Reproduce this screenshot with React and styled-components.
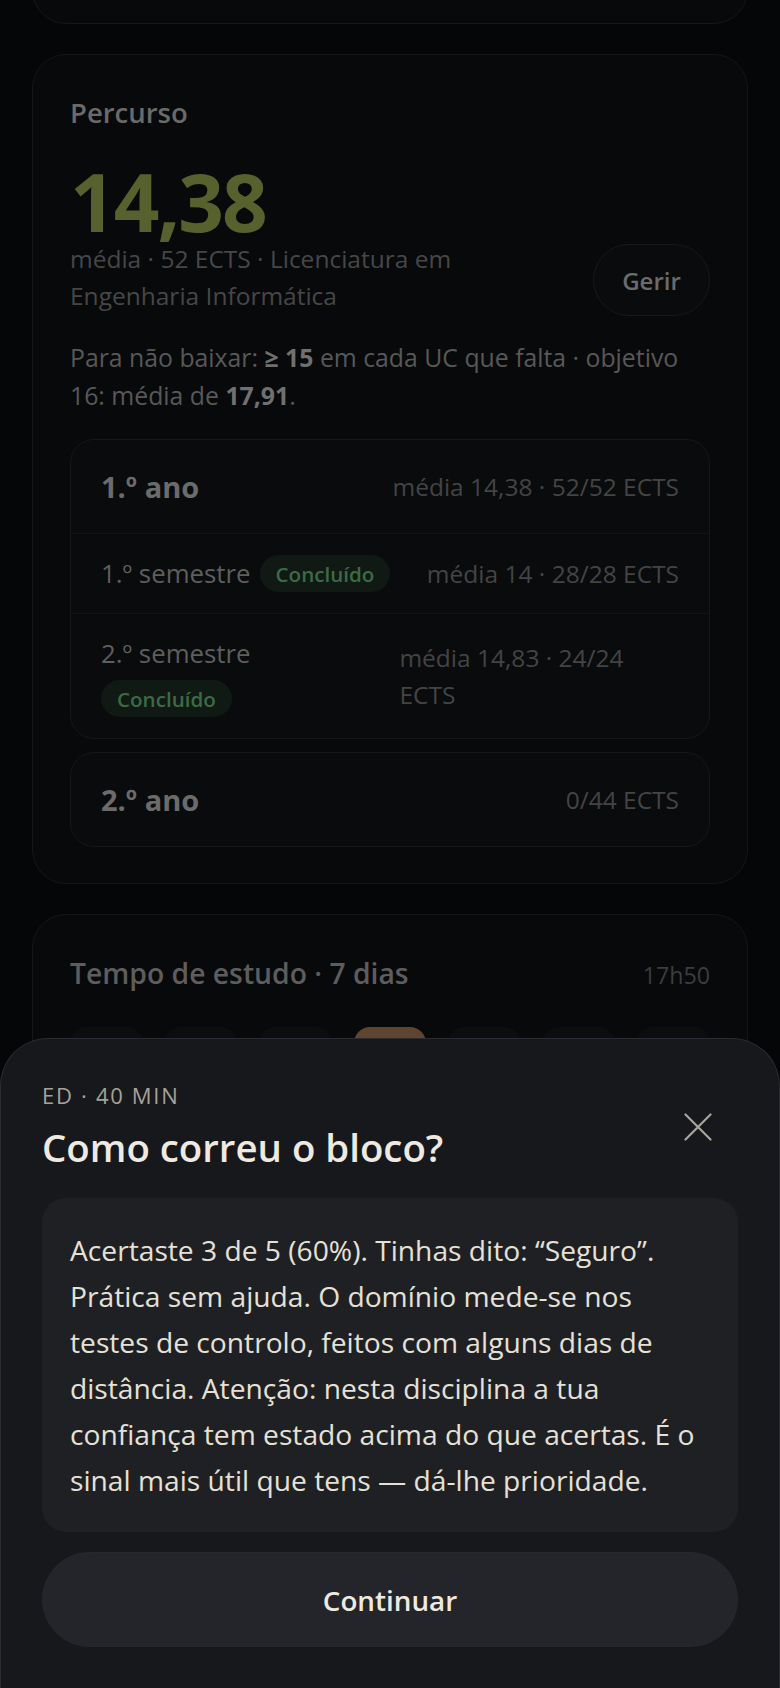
import React from 'react';
import styled, { createGlobalStyle } from 'styled-components';

const GlobalStyle = createGlobalStyle`
  html, body {
    margin: 0;
    padding: 0;
    background: #050607;
  }
  body {
    font-family: "Open Sans", "Noto Sans", sans-serif;
    -webkit-font-smoothing: antialiased;
  }
  * { box-sizing: border-box; }
`;

const Page = styled.div`
  display: flex;
  flex-direction: column;
  gap: 30px;
  padding: 0 32px;
  overflow: hidden;
  height: 1688px;
`;

const Card = styled.section`
  background: #08090b;
  border: 1px solid #15161a;
  border-radius: 34px;
  padding: 39px 37px 36px;
  flex-shrink: 0;
`;

const TopCard = styled(Card)`
  height: 120px;
  margin-top: -96px;
`;

const CardTitle = styled.h2`
  margin: 0;
  font-size: ${p => p.size || '27.5px'};
  line-height: 38px;
  font-weight: 600;
  color: ${p => p.color || '#6a6a6a'};
`;

const BigNumber = styled.div`
  margin-top: 30px;
  font-size: 80px;
  line-height: 78px;
  font-weight: 700;
  letter-spacing: -2px;
  color: #57612e;
`;

const MetaRow = styled.div`
  display: flex;
  align-items: center;
  justify-content: space-between;
  gap: 24px;
`;

const Meta = styled.p`
  margin: 0;
  font-size: 24.5px;
  line-height: 37px;
  color: #474747;
`;

const GhostButton = styled.button`
  flex-shrink: 0;
  width: 117px;
  height: 72px;
  margin: 3px 0 -3px;
  border-radius: 36px;
  border: 1px solid #18191c;
  background: #0a0b0d;
  color: #6b6b6b;
  font-family: inherit;
  font-size: 24px;
  font-weight: 600;
`;

const Hint = styled.p`
  margin: 25px 0 0;
  font-size: 24.8px;
  line-height: 37.7px;
  color: #585858;

  strong {
    font-weight: 700;
    color: #707070;
  }
`;

const Years = styled.div`
  margin-top: 25px;
  display: flex;
  flex-direction: column;
  gap: 13px;
`;

const YearBox = styled.div`
  background: #0a0b0d;
  border: 1px solid #16171a;
  border-radius: 24px;
  overflow: hidden;
`;

const Row = styled.div`
  display: flex;
  align-items: center;
  justify-content: space-between;
  gap: 16px;
  padding: ${p => (p.header ? '0 30px' : '21px 30px')};
  min-height: ${p => (p.header ? '93px' : 'auto')};
  border-top: ${p => (p.first ? 'none' : '1px solid #131417')};
`;

const YearName = styled.span`
  font-size: 29px;
  font-weight: 700;
  color: #6b6b6b;
  white-space: nowrap;
`;

const RowLeft = styled.div`
  display: flex;
  flex-wrap: wrap;
  align-items: center;
  column-gap: 9px;
  row-gap: 8px;
`;

const SemName = styled.span`
  font-size: 25.8px;
  line-height: 37px;
  color: #5e5e5e;
  white-space: nowrap;
`;

const Pill = styled.span`
  display: inline-flex;
  align-items: center;
  height: 37px;
  padding: 0 16px;
  border-radius: 19px;
  background: #101913;
  color: #3b6b45;
  font-size: 20.6px;
  font-weight: 600;
  white-space: nowrap;
`;

const RowStat = styled.span`
  font-size: 24.5px;
  line-height: 37px;
  color: #444444;
`;

const TitleRow = styled.div`
  display: flex;
  align-items: baseline;
  justify-content: space-between;
`;

const Total = styled.span`
  font-size: 23.2px;
  color: #3d3d3d;
`;

const Bars = styled.div`
  margin-top: 35px;
  display: grid;
  grid-template-columns: repeat(7, 1fr);
  gap: 22px;
  height: 260px;
  align-items: start;
`;

const Bar = styled.div`
  height: 200px;
  border-radius: 16px 16px 8px 8px;
  background: ${p => (p.active ? '#5d4530' : '#0c0d10')};
`;

const Sheet = styled.div`
  position: fixed;
  left: 0;
  right: 0;
  bottom: 0;
  background: #17181c;
  border: 1px solid #2a2c31;
  border-bottom: none;
  border-radius: 48px 48px 0 0;
  padding: 42px 41px 41px;
`;

const SheetHead = styled.div`
  display: flex;
  align-items: center;
  justify-content: space-between;
`;

const Eyebrow = styled.div`
  font-size: 22px;
  line-height: 28px;
  font-weight: 500;
  letter-spacing: 1.7px;
  color: #a6a297;
`;

const SheetTitle = styled.h1`
  margin: 13px 0 0;
  font-size: 38.4px;
  line-height: 50px;
  font-weight: 600;
  color: #efeae1;
`;

const CloseButton = styled.button`
  width: 56px;
  height: 56px;
  margin-right: 12px;
  display: flex;
  align-items: center;
  justify-content: center;
  border: none;
  background: transparent;
  padding: 0;
`;

const Feedback = styled.p`
  margin: 26px 0 0;
  padding: 29px 28px;
  border-radius: 24px;
  background: #1f2024;
  font-size: 28.2px;
  line-height: 46px;
  color: #e6e1d7;
`;

const PrimaryButton = styled.button`
  display: block;
  width: 100%;
  height: 95px;
  margin-top: 20px;
  border-radius: 48px;
  border: 1px solid #26282d;
  background: #23252a;
  color: #efeae1;
  font-family: inherit;
  font-size: 27.8px;
  font-weight: 600;
`;

const years = [
  {
    name: '1.º ano',
    stat: 'média 14,38 · 52/52 ECTS',
    semesters: [
      { name: '1.º semestre', stat: 'média 14 · 28/28 ECTS' },
      { name: '2.º semestre', stat: 'média 14,83 · 24/24 ECTS' },
    ],
  },
  { name: '2.º ano', stat: '0/44 ECTS', semesters: [] },
];

const days = [0, 1, 2, 3, 4, 5, 6];

export default function App() {
  return (
    <>
      <GlobalStyle />
      <Page>
        <TopCard />

        <Card>
          <CardTitle>Percurso</CardTitle>
          <BigNumber>14,38</BigNumber>
          <MetaRow>
            <Meta>média · 52 ECTS · Licenciatura em Engenharia Informática</Meta>
            <GhostButton>Gerir</GhostButton>
          </MetaRow>
          <Hint>
            Para não baixar: <strong>≥ 15</strong> em cada UC que falta · objetivo 16: média de{' '}
            <strong>17,91</strong>.
          </Hint>
          <Years>
            {years.map(y => (
              <YearBox key={y.name}>
                <Row header first>
                  <YearName>{y.name}</YearName>
                  <RowStat>{y.stat}</RowStat>
                </Row>
                {y.semesters.map(s => (
                  <Row key={s.name}>
                    <RowLeft>
                      <SemName>{s.name}</SemName>
                      <Pill>Concluído</Pill>
                    </RowLeft>
                    <RowStat>{s.stat}</RowStat>
                  </Row>
                ))}
              </YearBox>
            ))}
          </Years>
        </Card>

        <Card>
          <TitleRow>
            <CardTitle as="h3" size="28.3px" color="#5d5d5d">Tempo de estudo · 7 dias</CardTitle>
            <Total>17h50</Total>
          </TitleRow>
          <Bars>
            {days.map(d => (
              <Bar key={d} active={d === 3} />
            ))}
          </Bars>
        </Card>
      </Page>

      <Sheet>
        <SheetHead>
          <div>
            <Eyebrow>ED · 40 MIN</Eyebrow>
            <SheetTitle>Como correu o bloco?</SheetTitle>
          </div>
          <CloseButton aria-label="Fechar">
            <svg width="28" height="28" viewBox="0 0 28 28" fill="none">
              <path d="M1.5 1.5L26.5 26.5M26.5 1.5L1.5 26.5" stroke="#a8a59b" strokeWidth="2.2" strokeLinecap="round" />
            </svg>
          </CloseButton>
        </SheetHead>
        <Feedback>
          Acertaste 3 de 5 (60%). Tinhas dito: “Seguro”. Prática sem ajuda. O domínio mede-se nos testes de
          controlo, feitos com alguns dias de distância. Atenção: nesta disciplina a tua confiança tem estado
          acima do que acertas. É o sinal mais útil que tens — dá-lhe prioridade.
        </Feedback>
        <PrimaryButton>Continuar</PrimaryButton>
      </Sheet>
    </>
  );
}
